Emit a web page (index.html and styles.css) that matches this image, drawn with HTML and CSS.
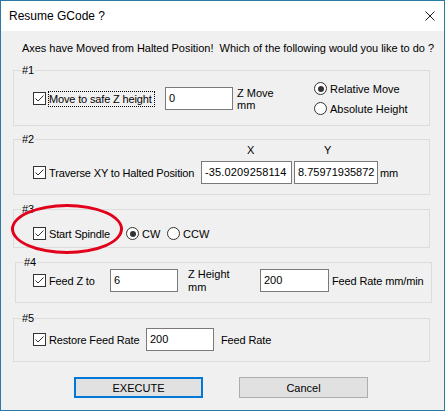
FILE: index.html
```html
<!DOCTYPE html>
<html>
<head>
<meta charset="utf-8">
<link rel="stylesheet" href="styles.css">
</head>
<body>
<div class="window">
  <div class="titlebar">
    <span class="title">Resume GCode ?</span>
    <svg class="close" width="10" height="10" viewBox="0 0 10 10"><path d="M0.5 0.5 L9.5 9.5 M9.5 0.5 L0.5 9.5" stroke="#1a1a1a" stroke-width="1" fill="none"/></svg>
  </div>
  <div class="client">
    <p class="prompt">Axes have Moved from Halted Position!&nbsp; Which of the following would you like to do ?</p>

    <div class="group g1">
      <div class="cap">#1</div>
      <div class="row r1">
        <span class="check"><svg width="11" height="11" viewBox="0 0 11 11"><path d="M1.5 5.5 L4 8 L9.5 2.5" stroke="#333" stroke-width="1" fill="none"/></svg></span>
        <span class="lbl focus w-move">Move to safe Z height</span>
        <div class="input w68 ml10">0</div>
        <div class="twoline zmove">Z Move<br>mm</div>
        <div class="radios">
          <div class="radio"><span class="dot on"></span>Relative Move</div>
          <div class="radio"><span class="dot"></span>Absolute Height</div>
        </div>
      </div>
    </div>

    <div class="group g2">
      <div class="cap">#2</div>
      <div class="grid2">
        <span></span>
        <span class="axis ax-x">X</span>
        <span class="axis ax-y">Y</span>
        <span></span>
        <div class="chkrow">
          <span class="check"><svg width="11" height="11" viewBox="0 0 11 11"><path d="M1.5 5.5 L4 8 L9.5 2.5" stroke="#333" stroke-width="1" fill="none"/></svg></span>
          <span class="lbl">Traverse XY to Halted Position</span>
        </div>
        <div class="input w91 xval">-35.0209258114</div>
        <div class="input w84">8.75971935872</div>
        <span class="unit">mm</span>
      </div>
    </div>

    <div class="group g3">
      <div class="cap">#3</div>
      <div class="row r3">
        <span class="check"><svg width="11" height="11" viewBox="0 0 11 11"><path d="M1.5 5.5 L4 8 L9.5 2.5" stroke="#333" stroke-width="1" fill="none"/></svg></span>
        <span class="lbl w-spindle">Start Spindle</span>
        <div class="radio w-cw"><span class="dot on"></span>CW</div>
        <div class="radio"><span class="dot"></span>CCW</div>
      </div>
    </div>

    <div class="group g4">
      <div class="cap">#4</div>
      <div class="row r4">
        <span class="check"><svg width="11" height="11" viewBox="0 0 11 11"><path d="M1.5 5.5 L4 8 L9.5 2.5" stroke="#333" stroke-width="1" fill="none"/></svg></span>
        <span class="lbl w-feedz">Feed Z to</span>
        <div class="input w68">6</div>
        <div class="twoline zheight">Z Height<br>mm</div>
        <div class="input w69">200</div>
        <span class="unit ml3">Feed Rate mm/min</span>
      </div>
    </div>

    <div class="group g5">
      <div class="cap">#5</div>
      <div class="row r5">
        <span class="check"><svg width="11" height="11" viewBox="0 0 11 11"><path d="M1.5 5.5 L4 8 L9.5 2.5" stroke="#333" stroke-width="1" fill="none"/></svg></span>
        <span class="lbl w-restore">Restore Feed Rate</span>
        <div class="input w68">200</div>
        <span class="unit ml7">Feed Rate</span>
      </div>
    </div>

    <div class="buttons">
      <button class="btn default">EXECUTE</button>
      <button class="btn">Cancel</button>
    </div>
  </div>
  <div class="annot"></div>
</div>
</body>
</html>
```

FILE: styles.css
```css
html, body {
  margin: 0;
  padding: 0;
  background: #ffffff;
}
body {
  font-family: "Liberation Sans", Arial, sans-serif;
  font-size: 11px;
  color: #000;
}
.window {
  position: relative;
  width: 445px;
  height: 411px;
  box-sizing: border-box;
  border: 1px solid #2b79a5;
  background: #f0f0f0;
  display: flex;
  flex-direction: column;
}
.titlebar {
  height: 30px;
  flex: none;
  background: #fff;
  display: flex;
  align-items: center;
  padding-left: 8px;
  padding-right: 9px;
}
.title {
  font-family: "Liberation Sans", Arial, sans-serif;
  font-size: 12px;
  color: #000;
}
.close {
  margin-left: auto;
  display: block;
}
.client {
  flex: 1;
  display: flex;
  flex-direction: column;
}
.prompt {
  margin: 11px 0 0 21px;
  line-height: 13px;
  white-space: nowrap;
  letter-spacing: -0.03px;
}
.group {
  box-sizing: border-box;
  border: 1px solid #dcdcdc;
  margin-left: 12px;
  width: 417px;
}
.g1 { margin-top: 15px; height: 56px; }
.g2 { margin-top: 13px; height: 56px; }
.g3 { margin-top: 14px; height: 39px; }
.g4 { margin-top: 14px; height: 41px; margin-left: 14px; }
.g5 { margin-top: 15px; height: 44px; }
.cap {
  margin: -7px 0 0 7px;
  padding: 0 1px;
  height: 13px;
  line-height: 13px;
  background: #f0f0f0;
  width: max-content;
}
.row {
  display: flex;
  align-items: center;
  height: 23px;
  padding-left: 19px;
}
.r1 { margin-top: 10px; }
.r3 { margin-top: 11px; height: 13px; }
.r4 { margin-top: 0; padding-left: 17px; }
.r5 { margin-top: 3px; }
.check {
  box-sizing: border-box;
  width: 13px;
  height: 13px;
  border: 1px solid #333;
  background: #fff;
  flex: none;
  display: block;
}
.check svg { display: block; }
.lbl {
  box-sizing: border-box;
  margin-left: 2px;
  border: 1px solid transparent;
  height: 16px;
  line-height: 14px;
  white-space: nowrap;
  flex: none;
  letter-spacing: -0.15px;
}
.focus { border: 1px dotted #000; }
.w-move { width: 107px; }
.w-spindle { width: 78px; }
.w-feedz { width: 62px; }
.w-restore { width: 98px; }
.input {
  box-sizing: border-box;
  height: 23px;
  border: 1px solid #7a7a7a;
  background: #fff;
  padding: 0 3px;
  line-height: 20px;
  overflow: hidden;
  white-space: nowrap;
  flex: none;
}
.xval { letter-spacing: 0.15px; }
.w68 { width: 68px; }
.w69 { width: 69px; }
.w91 { width: 91px; }
.w84 { width: 84px; }
.ml10 { margin-left: 10px; }
.ml3 { margin-left: 3px; }
.ml7 { margin-left: 7px; }
.twoline {
  line-height: 12px;
  flex: none;
}
.zmove { margin-left: 4px; width: 77px; }
.zheight { margin-left: 10px; width: 72px; line-height: 13px; }
.radios {
  display: flex;
  flex-direction: column;
}
.radio {
  display: flex;
  align-items: center;
  height: 20px;
  white-space: nowrap;
}
.r3 .radio { height: 13px; }
.w-cw { width: 41px; }
.dot {
  box-sizing: border-box;
  width: 13px;
  height: 13px;
  border: 1px solid #333;
  border-radius: 50%;
  background: #fff;
  margin-right: 3px;
  position: relative;
  flex: none;
}
.dot.on::after {
  content: "";
  position: absolute;
  left: 2.5px;
  top: 2.5px;
  width: 6px;
  height: 6px;
  border-radius: 50%;
  background: #333;
}
.grid2 {
  display: grid;
  grid-template-columns: 168px 93px 86px auto;
  grid-template-rows: 12px 23px;
  row-gap: 5px;
  margin-top: -2px;
  padding-left: 19px;
}
.axis { line-height: 12px; }
.ax-x { padding-left: 46px; }
.ax-y { padding-left: 30px; }
.chkrow {
  display: flex;
  align-items: center;
}
.unit {
  align-self: center;
  white-space: nowrap;
  letter-spacing: -0.12px;
}
.buttons {
  display: flex;
  margin-top: 15px;
  padding-left: 73px;
  gap: 36px;
}
.btn {
  box-sizing: border-box;
  width: 129px;
  height: 21px;
  margin: 0;
  padding: 0;
  background: #e1e1e1;
  border: 1px solid #adadad;
  font-family: "Liberation Sans", Arial, sans-serif;
  font-size: 11px;
  color: #000;
}
.btn.default {
  border: 2px solid #0078d7;
}
.annot {
  position: absolute;
  left: 10px;
  top: 203px;
  width: 112px;
  height: 50px;
  box-sizing: border-box;
  border: 3px solid #e2001a;
  border-radius: 50%;
}
```
